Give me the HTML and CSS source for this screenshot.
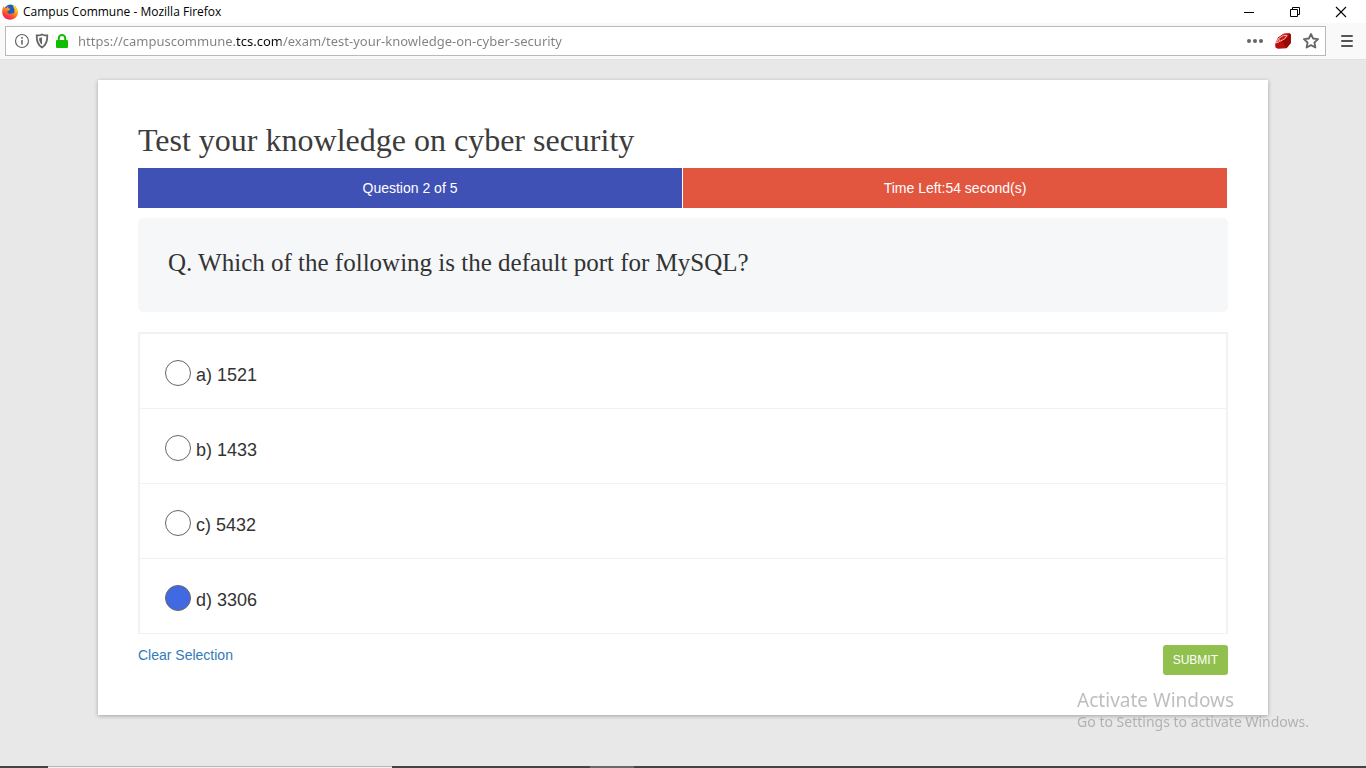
FILE: index.html
```html
<!DOCTYPE html>
<html lang="en">
<head>
<meta charset="utf-8">
<title>Campus Commune</title>
<meta name="viewport" content="width=device-width, initial-scale=1">
<link rel="stylesheet" href="styles.css">
</head>
<body>
<div class="window">
  <header class="titlebar">
    <svg class="logo" viewBox="0 0 16 16" width="16" height="16" aria-hidden="true">
      <defs>
        <linearGradient id="flame" x1="0.8" y1="0" x2="0.2" y2="1">
          <stop offset="0" stop-color="#ffe226"/>
          <stop offset="0.35" stop-color="#ff9a1c"/>
          <stop offset="0.7" stop-color="#ff4530"/>
          <stop offset="1" stop-color="#e21373"/>
        </linearGradient>
      </defs>
      <circle cx="8.500" cy="7" r="6.500" fill="#1c5cc0"/>
      <path d="M1.500 2.200 3 4l2-.3 1-1.700.4 2 1.800 1-1 1.500-2 .7c.3 2 2 3 3.600 2.600 1.200-.4 2-1 2.800-.8-1 2-3.600 2.200-4.600 1.800 4 1 6-2 5.300-5.200L10.800 1.500C14 2.400 16 5.300 16 8.300c0 4.200-3.500 7.400-7.900 7.400C3.500 15.700.2 12.400.2 8 .2 5.800.7 3.800 1.500 2.200Z" fill="url(#flame)"/>
      <path d="M10 .7c3 .8 5 3 5.500 6L13.800 9c.2-3-.8-5.500-3.800-8.300Z" fill="#ffc928"/>
    </svg>
    <span class="window-title">Campus Commune - Mozilla Firefox</span>
    <button class="win-btn" type="button" aria-label="Minimize"><svg viewBox="0 0 12 12" width="12" height="12"><path d="M1 6.500h10" fill="none" stroke="#000"/></svg></button>
    <button class="win-btn" type="button" aria-label="Restore"><svg viewBox="0 0 12 12" width="12" height="12"><path d="M1.500 3.500h7v7h-7zM3.500 3.500v-2h7v7h-2" fill="none" stroke="#000"/></svg></button>
    <button class="win-btn" type="button" aria-label="Close"><svg viewBox="0 0 12 12" width="12" height="12"><path d="m1 1 10 10M11 1 1 11" fill="none" stroke="#000" stroke-width="1.100"/></svg></button>
  </header>

  <div class="toolbar">
    <div class="urlbar">
      <button class="icon-btn" type="button" aria-label="Site information"><svg viewBox="0 0 16 16" width="16" height="16"><circle cx="8" cy="8" r="6.500" fill="none" stroke="#666" stroke-width="1.200"/><path d="M8 7v4.500M8 4v1.800" fill="none" stroke="#666" stroke-width="1.600"/></svg></button>
      <button class="icon-btn" type="button" aria-label="Tracking protection"><svg viewBox="0 0 16 16" width="16" height="16"><path d="M8 1.500c1.500 1 3.500 1 5.300 1 .2 6-1 9.500-5.300 12-4.300-2.500-5.500-6-5.300-12 1.800 0 3.800 0 5.300-1Z" fill="none" stroke="#666" stroke-width="1.800"/><path d="M8 4.200v7.600C5.900 10.200 5.200 8 5.100 4.900 6.300 4.900 7.200 4.700 8 4.200Z" fill="#666"/></svg></button>
      <button class="icon-btn" type="button" aria-label="Secure connection"><svg viewBox="0 0 16 16" width="16" height="16"><path d="M4.800 8V5.200a3.200 3.200 0 0 1 6.400 0V8" fill="none" stroke="#12bc00" stroke-width="2"/><rect x="2" y="7" width="12" height="8" rx="1" fill="#12bc00"/></svg></button>
      <input class="url" type="text" aria-label="Address" spellcheck="false" value="https://campuscommune.tcs.com/exam/test-your-knowledge-on-cyber-security">
      <button class="icon-btn wide" type="button" aria-label="Page actions"><svg viewBox="0 0 16 16" width="16" height="16"><g fill="#666"><circle cx="2" cy="8" r="2"/><circle cx="8" cy="8" r="2"/><circle cx="14" cy="8" r="2"/></g></svg></button>
      <button class="icon-btn wide" type="button" aria-label="Ruby extension"><svg viewBox="0 0 16 16" width="16" height="16"><path d="M8.500.8 14.500.2l1.300 1.300v8.500L11.500 15.300 3 15.800.4 14.500.2 11 3 4.500Z" fill="#b80f0f"/><path d="M8.500.8 14.500.2l-2 4L7 8 1 10l2.500-5.500Z" fill="#cf1c1a"/><path d="m12.500 4.200 2-4 1.300 1.300V10l-4.300 5.300L7 8Z" fill="#960808"/><path d="M1 10.200 3.500 5.500 8.500 2.300l3.500.3L9.500 6 4.500 8.500 1.500 10M4.500 8.500 3.800 5.500" fill="none" stroke="#f3b5ae"/></svg></button>
      <button class="icon-btn wide" type="button" aria-label="Bookmark this page"><svg viewBox="0 0 16 16" width="16" height="16"><path d="m8 1 2.100 4.500 5 .6-3.700 3.400 1 5L8 12.100l-4.400 2.400 1-5L.9 6.100l5-.6Z" fill="none" stroke="#666" stroke-width="1.800" stroke-linejoin="round"/></svg></button>
    </div>
    <button class="icon-btn menu" type="button" aria-label="Open menu"><svg viewBox="0 0 16 16" width="16" height="16"><path d="M3 3h10M3 8h10M3 13h10" fill="none" stroke="#555" stroke-width="2" stroke-linecap="round"/></svg></button>
  </div>

  <main class="page">
    <form class="card">
      <h1 class="title">Test your knowledge on cyber security</h1>
      <div class="status">
        <div class="status-cell progress">Question 2 of 5</div>
        <div class="status-cell timer">Time Left:54 second(s)</div>
      </div>
      <h2 class="question" id="question">Q. Which of the following is the default port for MySQL?</h2>
      <div class="options" role="radiogroup" aria-labelledby="question">
        <label class="option"><input class="radio" type="radio" name="answer" value="a"><span class="option-text">a) 1521</span></label>
        <label class="option"><input class="radio" type="radio" name="answer" value="b"><span class="option-text">b) 1433</span></label>
        <label class="option"><input class="radio" type="radio" name="answer" value="c"><span class="option-text">c) 5432</span></label>
        <label class="option"><input class="radio" type="radio" name="answer" value="d" checked><span class="option-text">d) 3306</span></label>
      </div>
      <div class="actions">
        <a class="clear" href="#">Clear Selection</a>
        <button class="submit" type="submit">SUBMIT</button>
      </div>
    </form>
  </main>

  <footer class="taskbar">
    <span class="task-start"></span>
    <span class="task-search"></span>
    <span class="task-gap"></span>
    <span class="task-active"></span>
  </footer>
</div>
<aside class="watermark">
  <div class="watermark-title">Activate Windows</div>
  <div class="watermark-text">Go to Settings to activate Windows.</div>
</aside>
</body>
</html>
```
FILE: styles.css
```css
* {
  box-sizing: border-box;
}

body {
  margin: 0;
  background: #e8e8e8;
  color: #333;
  font: 14px/20px "Liberation Sans", Arial, sans-serif;
}

.window {
  display: flex;
  flex-direction: column;
  min-height: 100vh;
}

/* Browser frame */
.titlebar {
  display: flex;
  align-items: center;
  height: 23px;
  padding: 0 2px;
  background: #fff;
  color: #000;
}

.logo {
  flex: none;
}

.window-title {
  flex: 1;
  padding-left: 5px;
  font: 12px/16px "Open Sans", "Noto Sans", sans-serif;
}

.win-btn {
  display: grid;
  place-items: center;
  width: 46px;
  height: 20px;
  padding: 0;
  border: 0;
  background: none;
}

.toolbar {
  display: flex;
  align-items: center;
  height: 37px;
  padding: 0 9px 0 5px;
  border-bottom: 1px solid #e0e0e1;
  background: #f9f9fa;
}

.urlbar {
  display: flex;
  flex: 1;
  align-items: center;
  height: 30px;
  padding-left: 6px;
  border: 1px solid #b9b9b9;
  background: #fff;
}

.icon-btn {
  display: grid;
  flex: none;
  place-items: center;
  width: 20px;
  height: 28px;
  padding: 0;
  border: 0;
  background: none;
}

.icon-btn.wide {
  width: 28px;
}

.icon-btn.menu {
  width: 20px;
  margin-left: 11px;
}

/* The registered domain is darker than the rest of the address */
.url {
  flex: 1;
  min-width: 0;
  height: 28px;
  padding: 0 0 0 6px;
  border: 0;
  outline: 0;
  background: linear-gradient(90deg, #808080 163px, #0c0c0d 163px, #0c0c0d 209px, #808080 209px);
  -webkit-background-clip: text;
  background-clip: text;
  color: transparent;
  font: 13px/20px "Noto Sans", "Open Sans", sans-serif;
}

/* Quiz */
.page {
  flex: 1;
  padding: 20px;
}

.card {
  max-width: 1170px;
  margin: 0 auto;
  padding: 40px;
  background: #fff;
  box-shadow: 0 1px 4px rgba(0, 0, 0, 0.3);
}

.title {
  margin: 0 0 8px;
  color: #3c3c3c;
  font: 400 32px/40px "Liberation Serif", serif;
}

.status {
  display: grid;
  grid-template-columns: 1fr 1fr;
  gap: 1px;
  padding-right: 1px;
  color: #fff;
  text-align: center;
}

.status-cell {
  padding: 10px;
}

.progress {
  background: #3f51b5;
}

.timer {
  background: #e2563f;
}

.question {
  margin: 10px 0 20px;
  padding: 28px 30px 32px;
  border-radius: 5px;
  background: #f5f7f9;
  font: 400 25px/34px "Liberation Serif", serif;
}

.options {
  border: 2px solid #f2f2f2;
  border-bottom: 0;
}

.option {
  display: flex;
  align-items: flex-start;
  gap: 5px;
  padding: 26px 25px 20px;
  border-bottom: 1px solid #f2f2f2;
  font-size: 18px;
  line-height: 26px;
}

.option-text {
  padding-top: 2px;
}

.radio {
  width: 26px;
  height: 26px;
  margin: 0;
  border: 1px solid #666;
  border-radius: 50%;
  background: #fff;
  appearance: none;
}

.radio:checked {
  background: #4169e1;
}

.actions {
  display: flex;
  align-items: flex-start;
  justify-content: space-between;
  padding-top: 11px;
}

.clear {
  color: #337ab7;
  text-decoration: none;
}

.submit {
  padding: 5px 10px;
  border: 0;
  border-radius: 3px;
  background: #92c04f;
  color: #fff;
  font: 12px/20px "Liberation Sans", Arial, sans-serif;
}

/* Desktop */
.taskbar {
  display: flex;
  height: 2px;
  background: #444;
}

.task-start {
  width: 48px;
}

.task-search {
  width: 344px;
  border-top: 1px solid #b8b8b8;
  background: #f2f2f2;
}

.task-gap {
  width: 198px;
}

.task-active {
  width: 44px;
  background: #6a6a6a;
}

.watermark {
  position: fixed;
  right: 57px;
  bottom: 36px;
  color: rgba(110, 110, 110, 0.45);
  font-family: "Noto Sans", "Open Sans", sans-serif;
  pointer-events: none;
}

.watermark-title {
  font-size: 19px;
  line-height: 24px;
}

.watermark-text {
  font-size: 14px;
  line-height: 20px;
}
```
